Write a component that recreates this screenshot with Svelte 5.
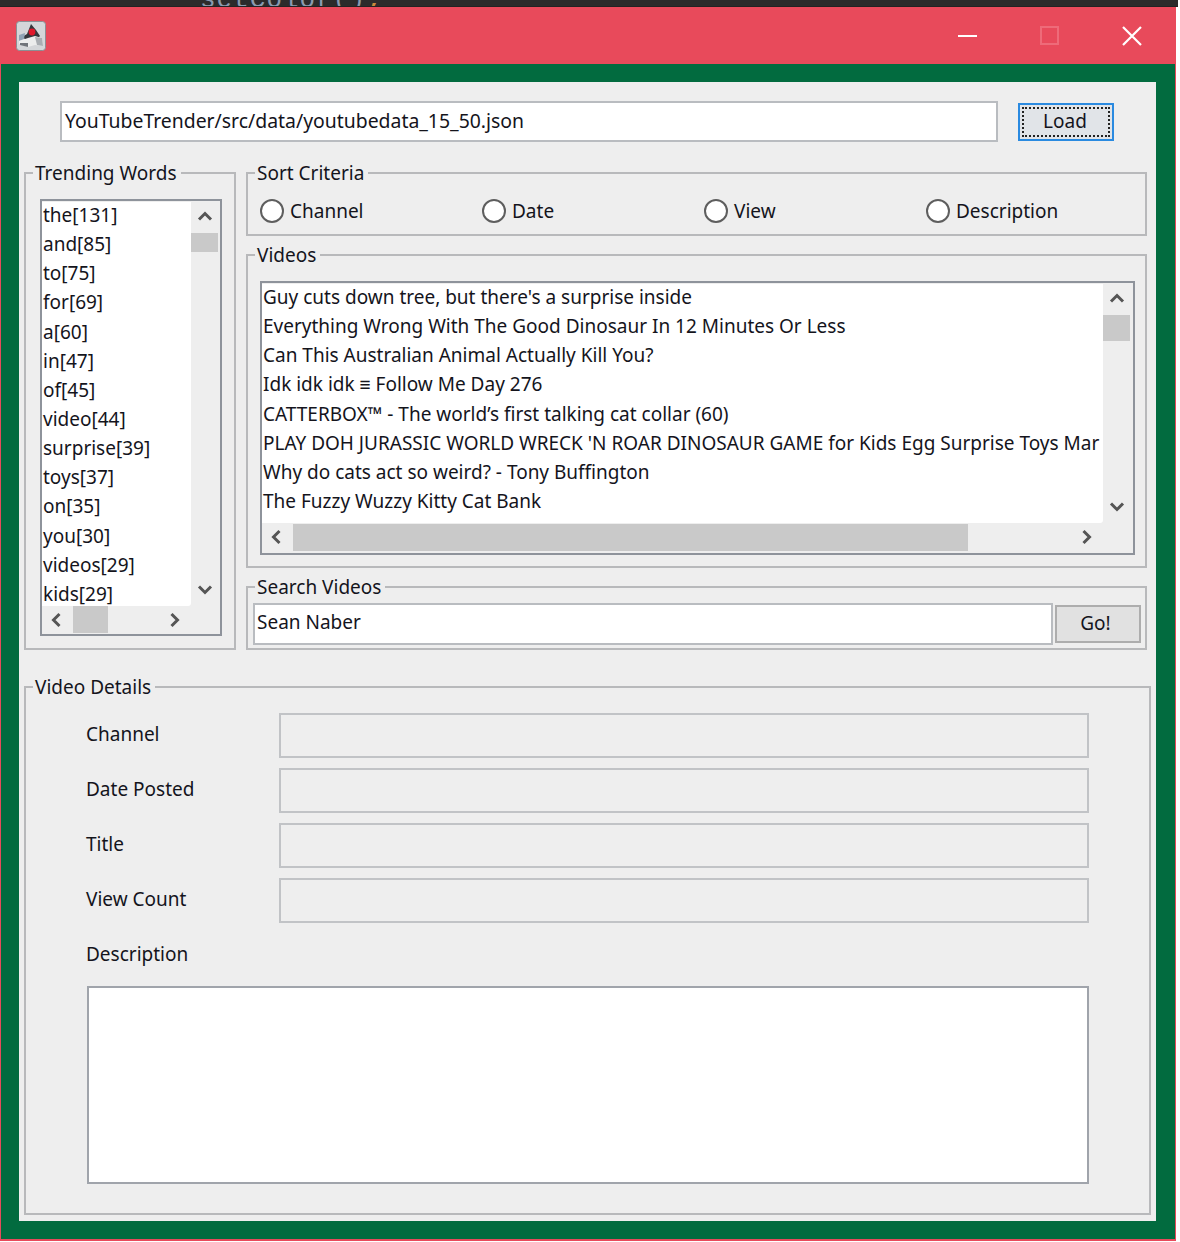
<script>
  const words = ['the[131]','and[85]','to[75]','for[69]','a[60]','in[47]','of[45]','video[44]','surprise[39]','toys[37]','on[35]','you[30]','videos[29]','kids[29]'];
  const videos = [
    "Guy cuts down tree, but there's a surprise inside",
    'Everything Wrong With The Good Dinosaur In 12 Minutes Or Less',
    'Can This Australian Animal Actually Kill You?',
    'Idk idk idk ≡ Follow Me Day 276',
    'CATTERBOX™ - The world’s first talking cat collar (60)',
    "PLAY DOH JURASSIC WORLD WRECK 'N ROAR DINOSAUR GAME for Kids Egg Surprise Toys Mar",
    'Why do cats act so weird? - Tony Buffington',
    'The Fuzzy Wuzzy Kitty Cat Bank'
  ];
  const sorts = ['Channel','Date','View','Description'];
  const details = ['Channel','Date Posted','Title','View Count'];
</script>

{#snippet chev(d)}
  <svg class="chev" viewBox="0 0 16 16" width="16" height="16"><path d={d} fill="none" stroke="#555" stroke-width="3"/></svg>
{/snippet}
{#snippet up()}{@render chev('M2 11.5 8 5.5 14 11.5')}{/snippet}
{#snippet down()}{@render chev('M2 4.5 8 10.5 14 4.5')}{/snippet}
{#snippet left()}{@render chev('M11.5 2 5.5 8 11.5 14')}{/snippet}
{#snippet right()}{@render chev('M4.5 2 10.5 8 4.5 14')}{/snippet}

<div class="desktop">
  <div class="behind"><span>setColor()<i>;</i></span></div>
  <div class="window">
    <header class="title">
      <svg class="appicon" viewBox="0 0 30 30" width="30" height="30">
        <rect x="0.5" y="0.5" width="29" height="29" rx="3" fill="#d4d6d9" stroke="#8b8f94"/>
        <path d="M15 3 20 9 24 15 21 18 9 18 6 16 11 13Z" fill="#34373c"/>
        <path d="M3 14 9 12 8 18 3 20Z" fill="#8fa3b5"/>
        <path d="M3 20 12 17 19 15 26 17 27 25 19 24 12 26 3 23Z" fill="#eceded"/>
        <path d="M19 16 26 17 27 25 21 24Z" fill="#a9adb2"/>
        <path d="M4 22 12 22 12 26 4 24Z" fill="#70747a"/>
        <circle cx="16" cy="11" r="3.4" fill="#e0172b"/>
      </svg>
      <div class="controls">
        <svg viewBox="0 0 20 20" width="20" height="20"><path d="M0 10H19" stroke="#fff" stroke-width="2"/></svg>
        <svg viewBox="0 0 20 20" width="20" height="20"><rect x="1" y="1" width="17" height="17" fill="none" stroke="#ee6b79" stroke-width="2"/></svg>
        <svg viewBox="0 0 20 20" width="20" height="20"><path d="M1 1 19 19M19 1 1 19" stroke="#fff" stroke-width="2.2"/></svg>
      </div>
    </header>
    <main class="panel">
      <div class="fileRow">
        <div class="input file">YouTubeTrender/src/data/youtubedata_15_50.json</div>
        <button class="load"><span>Load</span></button>
      </div>

      <div class="middle">
        <section class="group words">
          <div class="legend">Trending Words</div>
          <div class="scroller wordList">
            <div class="items">
              {#each words as w}<div class="row">{w}</div>{/each}
            </div>
            <div class="vbar">
              {@render up()}
              <div class="vthumb"></div>
              <div class="spacer"></div>
              {@render down()}
            </div>
            <div class="hbar">
              {@render left()}
              <div class="hthumb"></div>
              <div class="spacer"></div>
              {@render right()}
            </div>
          </div>
        </section>

        <div class="rightCol">
          <section class="group sort">
            <div class="legend">Sort Criteria</div>
            <div class="radios">
              {#each sorts as s}
                <div class="radio"><span class="dot"></span>{s}</div>
              {/each}
            </div>
          </section>

          <section class="group vids">
            <div class="legend">Videos</div>
            <div class="scroller videoList">
              <div class="items">
                {#each videos as v}<div class="row">{v}</div>{/each}
              </div>
              <div class="vbar">
                {@render up()}
                <div class="vthumb"></div>
                <div class="spacer"></div>
                {@render down()}
              </div>
              <div class="hbar">
                {@render left()}
                <div class="hthumb"></div>
                <div class="spacer"></div>
                {@render right()}
              </div>
            </div>
          </section>

          <section class="group search">
            <div class="legend">Search Videos</div>
            <div class="searchRow">
              <div class="input query">Sean Naber</div>
              <button class="go">Go!</button>
            </div>
          </section>
        </div>
      </div>

      <section class="group detailsBox">
        <div class="legend">Video Details</div>
        {#each details as d}
          <div class="field">
            <div class="lab">{d}</div>
            <div class="box"></div>
          </div>
        {/each}
        <div class="lab descLab">Description</div>
        <div class="area"></div>
      </section>
    </main>
  </div>
</div>

<style>
  :global(body) { margin: 0; background: #fff; }
  .desktop {
    width: 1180px; height: 1242px; overflow: hidden; position: relative;
    font-family: "Noto Sans", "Open Sans", sans-serif; font-size: 19px; color: #14141c;
  }
  .behind {
    height: 7px; width: 1178px; background: #2b2b2b; overflow: hidden; position: relative;
    border-bottom: 1px solid #222; box-sizing: border-box;
  }
  .behind span {
    position: absolute; left: 200px; top: -15px; font-size: 26px; letter-spacing: 1px; color: #8a9bb0;
    font-family: "Liberation Mono", monospace;
  }
  .behind i { font-style: normal; color: #c98a3c; }
  .window {
    width: 1176px; background: #e84a5b; padding: 0 1px 2px 1px; box-sizing: border-box; height: 1234px;
    display: flex; flex-direction: column;
  }
  .title { height: 57px; flex: none; display: flex; align-items: center; justify-content: space-between; padding: 0 33px 0 15px; }
  .appicon { display: block; }
  .controls { display: flex; gap: 62px; align-items: center; }
  .controls svg { display: block; }
  .panel {
    flex: 1; background: #eeeeee; border: solid #026b3f; border-width: 18px 19px 18px 18px;
    box-sizing: border-box; padding: 0 0 0 5px; min-height: 0;
  }
  .input { background: #fff; border: 2px solid #b9bcc0; box-sizing: border-box; white-space: nowrap; overflow: hidden; line-height: 35px; }
  .fileRow { display: flex; align-items: flex-start; height: 90px; padding: 19px 0 0 36px; box-sizing: border-box; }
  .file { width: 938px; height: 41px; padding-left: 3px; font-size: 19.4px; }
  .load {
    margin: 2px 0 0 20px; width: 96px; height: 38px; padding: 2px; box-sizing: border-box;
    border: 2px solid #2a8ae0; background: #e1e4e8; font: inherit; color: inherit;
  }
  .load span { display: block; height: 100%; padding-right: 2px; border: 2px dotted #222; box-sizing: border-box; line-height: 25px; }
  .middle { display: flex; gap: 10px; height: 478px; }
  .group { position: relative; border: 2px solid #b8b9bb; box-sizing: border-box; }
  .legend { position: absolute; left: 7px; top: -13px; line-height: 24px; padding: 0 4px 0 2px; background: #eeeeee; white-space: nowrap; }
  .words { width: 212px; height: 478px; padding: 25px 0 0 14px; flex: none; }
  .rightCol { width: 901px; display: flex; flex-direction: column; gap: 18px; }
  .sort { height: 64px; }
  .radios { display: grid; grid-template-columns: repeat(4, 222px); padding: 25px 0 0 12px; }
  .radio { display: flex; align-items: center; gap: 6px; height: 24px; line-height: 22px; }
  .dot { width: 24px; height: 24px; border-radius: 50%; background: #fff; border: 2px solid #5e5e5e; box-sizing: border-box; flex: none; }
  .scroller {
    display: grid; border: 2px solid #8e939b; box-sizing: border-box; background: #eee; padding-top: 1px;
  }
  .wordList { width: 182px; height: 437px; grid-template-columns: 149px 30px; grid-template-rows: 404px 1fr; }
  .videoList { width: 875px; height: 274px; margin: 25px 0 0 12px; grid-template-columns: 841px 30px; grid-template-rows: 239px 1fr; }
  .items { background: #fff; overflow: hidden; border-radius: 0 0 3px 0; }
  .row { height: 29.15px; line-height: 26px; white-space: nowrap; padding-left: 1px; }
  .vbar { display: flex; flex-direction: column; align-items: center; padding: 6px 4px 8px 0; box-sizing: border-box; grid-row: 1; grid-column: 2; }
  .vbar .chev { margin-left: 2px; }
  .vthumb { width: 27px; background: #c9c9c9; flex: none; }
  .wordList .vthumb { height: 19px; margin-top: 9px; }
  .videoList .vthumb { height: 26px; margin-top: 9px; }
  .spacer { flex: 1; }
  .hbar { display: flex; align-items: center; padding: 0 8px 2px 6px; box-sizing: border-box; grid-row: 2; grid-column: 1; }
  .hthumb { height: 27px; background: #c9c9c9; flex: none; }
  .wordList .hthumb { width: 35px; margin-left: 9px; }
  .videoList .hthumb { width: 675px; margin-left: 9px; }
  .chev { flex: none; display: block; }
  .vids { height: 314px; }
  .search { height: 64px; }
  .searchRow { display: flex; align-items: flex-start; padding: 15px 0 0 5px; gap: 2px; }
  .query { width: 800px; height: 42px; padding-left: 2px; }
  .go {
    width: 86px; height: 38px; margin-top: 2px; border: 2px solid #adadad; background: #e1e1e1;
    font: inherit; color: inherit; padding: 0 5px 3px 0;
  }
  .detailsBox { width: 1127px; height: 529px; margin-top: 36px; padding: 25px 0 0 60px; }
  .field { display: flex; height: 45px; margin-bottom: 10px; align-items: flex-start; }
  .lab { width: 193px; line-height: 42px; white-space: nowrap; }
  .box { width: 810px; height: 45px; border: 2px solid #c1c3c6; box-sizing: border-box; }
  .descLab { height: 42px; }
  .area { width: 1002px; height: 198px; margin: 11px 0 0 1px; background: #fff; border: 2px solid #a0a4ab; box-sizing: border-box; }
</style>
